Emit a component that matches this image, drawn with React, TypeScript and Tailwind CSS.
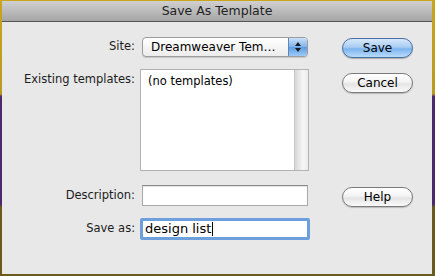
import React from 'react'

const FONT = "font-['Lucida_Grande','DejaVu_Sans',sans-serif]"

function AquaButton({ label, primary }: { label: string; primary?: boolean }) {
  return (
    <button
      className={
        primary
          ? 'h-[20px] w-[71px] rounded-full border border-[#4a6f9e] bg-[linear-gradient(to_bottom,#d7e8fb_0%,#a9cdf3_45%,#7db4ee_55%,#b9dcfc_100%)] text-[12px] leading-none text-black shadow-[0_1px_1px_rgba(0,0,0,0.25)]'
          : 'h-[20px] w-[71px] rounded-full border border-[#7b7b7b] bg-[linear-gradient(to_bottom,#ffffff_0%,#f3f3f3_45%,#e4e4e4_55%,#fafafa_100%)] text-[12px] leading-none text-black shadow-[0_1px_1px_rgba(0,0,0,0.2)]'
      }
    >
      {label}
    </button>
  )
}

function Label({ children, top }: { children: React.ReactNode; top?: boolean }) {
  return (
    <div className={`w-[139px] shrink-0 pr-[6px] text-right text-[11.5px] text-[#1c1c1c] ${top ? 'self-start pt-[2px]' : ''}`}>
      {children}
    </div>
  )
}

export default function App() {
  return (
    <div className={`h-[276px] w-[435px] overflow-hidden bg-[linear-gradient(to_bottom,#c9a51c_0%,#b89a20_34%,#4b2a6c_35%,#4b2a6c_74%,#6a5a1e_75%,#6a5a1e_100%)] pt-[1px] pr-[3px] pb-[2px] pl-[2px] ${FONT}`}>
      <div className="flex h-full w-full flex-col bg-[#e8e8e8]">
        {/* Title bar */}
        <div className="flex h-[21px] shrink-0 items-center justify-center border-b border-[#555] bg-[linear-gradient(to_bottom,#d0d0d0,#a6a6a6)] text-[12.5px] text-[#222]">
          Save As Template
        </div>

        {/* Site */}
        <div className="mt-[15px] flex h-[20px] items-center">
          <Label>Site:</Label>
          <div className="ml-[1px] flex h-[20px] w-[166px] overflow-hidden rounded-[4px] border border-[#9c9c9c] bg-[linear-gradient(to_bottom,#ffffff,#ececec)] shadow-[0_1px_1px_rgba(0,0,0,0.15)]">
            <div className="flex flex-1 items-center pl-[8px] text-[12px] text-black">Dreamweaver Tem…</div>
            <div className="flex w-[19px] flex-col items-center justify-center gap-[2px] border-l border-[#5c85b8] bg-[linear-gradient(to_bottom,#c9e0fa,#7eb2ec_50%,#5d9ae2_51%,#9ccbf8)]">
              <div className="h-0 w-0 border-x-[3px] border-b-[4px] border-x-transparent border-b-[#1a1a1a]" />
              <div className="h-0 w-0 border-x-[3px] border-t-[4px] border-x-transparent border-t-[#1a1a1a]" />
            </div>
          </div>
          <div className="ml-[34px]">
            <AquaButton label="Save" primary />
          </div>
        </div>

        {/* Existing templates */}
        <div className="mt-[12px] flex items-start">
          <Label top>Existing templates:</Label>
          <div className="ml-[-1px] flex h-[102px] w-[169px] border border-[#b3b3b3] bg-white">
            <div className="flex-1 pl-[7px] pt-[3px] text-[11.5px] text-black">(no templates)</div>
            <div className="w-[14px] border-l border-[#c8c8c8] bg-[linear-gradient(to_right,#d6d6d6,#f6f6f6_60%,#ececec)]" />
          </div>
          <div className="ml-[33px] mt-[1px]">
            <AquaButton label="Cancel" />
          </div>
        </div>

        {/* Description */}
        <div className="mt-[14px] flex h-[21px] items-center">
          <Label>Description:</Label>
          <div className="ml-[1px] h-[21px] w-[166px] border border-[#a8a8a8] border-t-[#8a8a8a] bg-white shadow-[inset_0_1px_1px_rgba(0,0,0,0.12)]" />
          <div className="ml-[34px]">
            <AquaButton label="Help" />
          </div>
        </div>

        {/* Save as */}
        <div className="mt-[12px] flex h-[22px] items-center">
          <Label>Save as:</Label>
          <div className="ml-[-1px] flex h-[22px] w-[170px] items-center rounded-[2px] border-[3px] border-[#6d9fdc] bg-white pl-[2px] text-[13px] text-black">
            design list
            <span className="ml-[1px] inline-block h-[14px] w-[1px] bg-black" />
          </div>
        </div>
      </div>
    </div>
  )
}
